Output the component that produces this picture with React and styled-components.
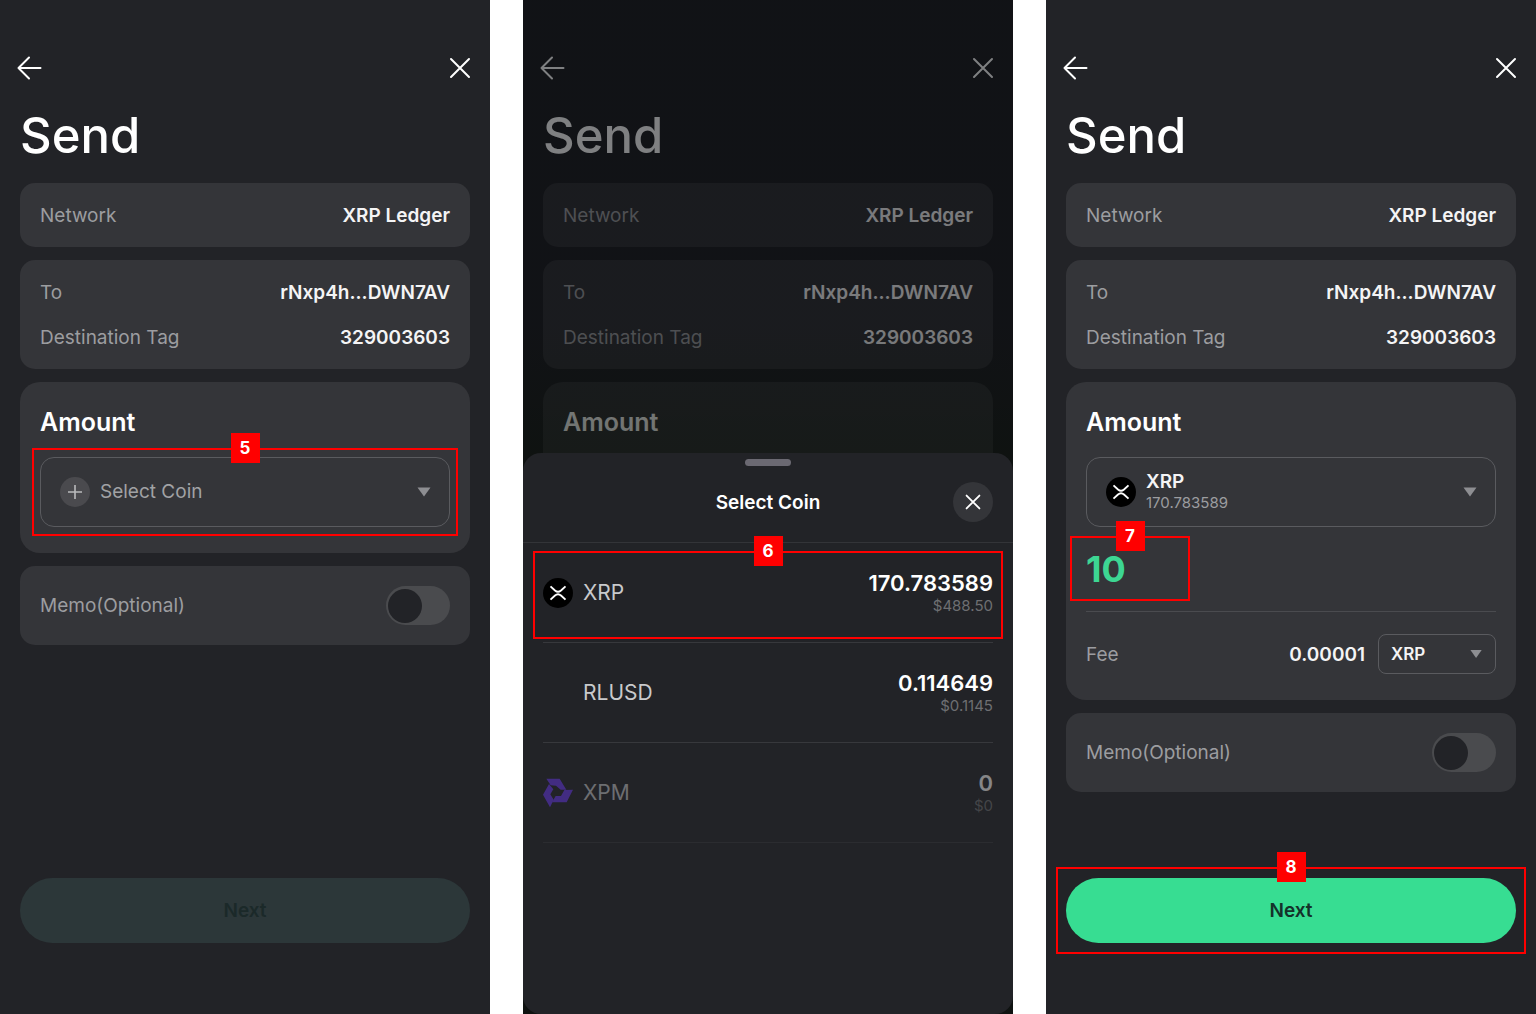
import React, { useId, useState } from "react"
import styled, { createGlobalStyle } from "styled-components"

const GlobalStyle = createGlobalStyle`
  * {
    box-sizing: border-box;
  }
  body {
    margin: 0;
    background: #ffffff;
    font-family: Inter, "Liberation Sans", sans-serif;
  }
  button, input, select {
    font-family: inherit;
  }
`

const Steps = styled.main`
  display: grid;
  grid-template-columns: repeat(3, minmax(0, 1fr));
  column-gap: 33px;
  min-height: 100vh;
`

const Screen = styled.section`
  position: relative;
  display: flex;
  flex-direction: column;
  padding: 48px 20px 71px;
  background: #222327;
  color: #ffffff;
`

const TopBar = styled.header`
  display: flex;
  justify-content: space-between;
  align-items: center;
  height: 40px;
  margin: 0 -4px;
`

const IconButton = styled.button`
  display: flex;
  align-items: center;
  justify-content: center;
  padding: 0;
  border: 0;
  background: none;
  color: inherit;
  cursor: pointer;
`

const Title = styled.h1`
  margin: 18px 0 17px;
  font-size: 49px;
  font-weight: 500;
  line-height: 60px;
`

const Cards = styled.div`
  display: flex;
  flex-direction: column;
  gap: 13px;
`

const Card = styled.div`
  display: flex;
  flex-direction: column;
  gap: 13px;
  padding: 16px 20px;
  border-radius: 15px;
  background: #343539;
`

const Row = styled.div`
  display: flex;
  justify-content: space-between;
  align-items: center;
  min-height: 32px;
`

const Label = styled.span`
  font-size: 19px;
  color: #9c9da0;
`

const Value = styled.span`
  font-size: 19px;
  font-weight: 600;
  color: #f4f4f5;
`

const AmountCard = styled.div`
  padding: 20px 20px 26px;
  border-radius: 20px;
  background: #343539;
`

const Heading = styled.h2`
  margin: 0 0 15px;
  font-size: 25px;
  font-weight: 600;
  line-height: 40px;
`

const CoinField = styled.div`
  position: relative;
  display: flex;
  align-items: center;
  gap: 10px;
  height: 70px;
  padding: 0 18px 0 19px;
  border: 1px solid #5a5b5f;
  border-radius: 14px;
`

const CoinText = styled.div`
  display: flex;
  flex: 1;
  flex-direction: column;
`

const Select = styled.select`
  width: 100%;
  padding: 0;
  border: 0;
  outline: 0;
  appearance: none;
  background: none;
  font-size: ${({ $size }) => $size || 19}px;
  font-weight: ${({ $strong }) => ($strong ? 600 : 400)};
  line-height: 22px;
  color: ${({ $strong }) => ($strong ? "#f4f4f5" : "#a1a2a5")};
`

const Balance = styled.span`
  font-size: 15px;
  line-height: 20px;
  color: #9c9da0;
`

const PlusCircle = styled.span`
  display: flex;
  align-items: center;
  justify-content: center;
  width: 30px;
  height: 30px;
  border-radius: 50%;
  background: #4a4a4e;
  color: #b9babc;
`

const AmountRow = styled.div`
  display: flex;
  align-items: center;
  height: 85px;
  border-bottom: 1px solid #4a4b4f;
`

const AmountBox = styled.div`
  position: relative;
  width: 88px;
  height: 48px;
`

const AmountInput = styled.input`
  width: 100%;
  height: 100%;
  padding: 0;
  border: 0;
  outline: 0;
  background: none;
  font-size: 36px;
  font-weight: 700;
  color: #3dd693;
`

const FeeRow = styled.div`
  display: flex;
  align-items: center;
  gap: 13px;
  margin-top: 22px;

  ${Label} {
    flex: 1;
  }
`

const FeeField = styled.div`
  display: flex;
  align-items: center;
  width: 118px;
  height: 40px;
  padding: 0 13px 0 12px;
  border: 1px solid #5a5b5f;
  border-radius: 8px;
`

const MemoRow = styled.label`
  display: flex;
  justify-content: space-between;
  align-items: center;
  padding: 20px;
  border-radius: 15px;
  background: #343539;
`

const Toggle = styled.input`
  display: flex;
  align-items: center;
  width: 64px;
  height: 39px;
  margin: 0;
  padding: 0 2px;
  border-radius: 20px;
  appearance: none;
  background: #4a4b4e;
  cursor: pointer;

  &::before {
    content: "";
    width: 34px;
    height: 34px;
    border-radius: 50%;
    background: #222327;
  }
  &:checked {
    justify-content: flex-end;
    background: #37dd92;
  }
`

const Footer = styled.footer`
  position: relative;
  margin-top: auto;
`

const NextButton = styled.button`
  display: block;
  width: 100%;
  height: 65px;
  border: 0;
  border-radius: 33px;
  background: #37dd92;
  font-size: 19px;
  font-weight: 600;
  color: #14322a;

  &:disabled {
    background: #2c3739;
    color: #1b2929;
  }
`

const Callout = styled.div`
  position: absolute;
  inset: ${({ $inset }) => $inset};
  display: flex;
  justify-content: center;
  border: 2px solid #ff0000;
  pointer-events: none;
`

const Badge = styled.span`
  width: 29px;
  height: 30px;
  margin-top: -17px;
  background: #ff0000;
  font-size: 17px;
  font-weight: 700;
  line-height: 30px;
  text-align: center;
  color: #ffffff;
`

const Backdrop = styled.div`
  position: absolute;
  inset: 0;
  background: linear-gradient(rgba(0, 2, 5, 0.5) 32%, rgba(0, 6, 0, 0.57) 45%);
`

const Sheet = styled.div`
  position: absolute;
  inset: 453px 0 0;
  display: flex;
  flex-direction: column;
  padding-top: 6px;
  border-radius: 18px;
  background: #222327;
`

const Handle = styled.span`
  align-self: center;
  width: 46px;
  height: 7px;
  border-radius: 4px;
  background: #6b6972;
`

const SheetHeader = styled.header`
  display: grid;
  grid-template-columns: 40px 1fr 40px;
  align-items: center;
  height: 77px;
  padding: 0 20px 4px;
  border-bottom: 1px solid #333438;
`

const SheetTitle = styled.h2`
  grid-column: 2;
  margin: 0;
  font-size: 19px;
  font-weight: 600;
  text-align: center;
`

const CloseButton = styled(IconButton)`
  width: 40px;
  height: 40px;
  border-radius: 50%;
  background: #343539;
`

const CoinList = styled.ul`
  margin: 0;
  padding: 0 20px;
  list-style: none;
`

const CoinItem = styled.li`
  position: relative;
  border-bottom: 1px solid #37383c;
  opacity: ${({ $dim }) => ($dim ? 0.45 : 1)};
`

const CoinButton = styled.button`
  display: grid;
  grid-template-columns: 30px 1fr auto;
  column-gap: 10px;
  align-items: center;
  width: 100%;
  height: 99px;
  padding: 0;
  border: 0;
  background: none;
  text-align: left;
  color: #ffffff;
`

const CoinName = styled.span`
  grid-column: 2;
  font-size: 21px;
  color: #c9cacc;
`

const CoinAmount = styled.span`
  display: flex;
  flex-direction: column;
  text-align: right;
  font-size: 22px;
  font-weight: 600;
  line-height: 26px;
`

const CoinPrice = styled.span`
  font-size: 15px;
  font-weight: 400;
  line-height: 20px;
  color: #6e6f72;
`

const BackIcon = () => (
  <svg width="28" height="28" viewBox="0 0 28 28" fill="none" stroke="currentColor" strokeWidth="2" strokeLinecap="round" strokeLinejoin="round" aria-hidden="true">
    <path d="M24.500 14H2.500M13 3.500L2.500 14L13 24.500" />
  </svg>
)

const CloseIcon = ({ size }) => (
  <svg width={size} height={size} viewBox="0 0 28 28" fill="none" stroke="currentColor" strokeWidth={size > 20 ? 2 : 2.6} strokeLinecap="round" aria-hidden="true">
    <path d="M5 5L23 23M23 5L5 23" />
  </svg>
)

const PlusIcon = () => (
  <svg width="16" height="16" viewBox="0 0 16 16" stroke="currentColor" strokeWidth="1.600" aria-hidden="true">
    <path d="M8 1V15M1 8H15" />
  </svg>
)

const Caret = () => (
  <svg width="14" height="10" viewBox="0 0 14 10" fill="#8d8e92" aria-hidden="true">
    <path d="M0.500 0.500H13.500L7 9.500Z" />
  </svg>
)

const XrpLogo = () => (
  <svg width="30" height="30" viewBox="0 0 30 30" aria-hidden="true">
    <circle cx="15" cy="15" r="15" fill="#000" />
    <g fill="none" stroke="#fff" strokeWidth="1.900">
      <path d="M7.500 8.400L12 12.500Q15 15 18 12.500L22.500 8.400" />
      <path d="M7.500 21.600L12 17.500Q15 15 18 17.500L22.500 21.600" />
    </g>
  </svg>
)

const XpmLogo = () => (
  <svg width="30" height="30" viewBox="0 0 90 90" fill="#6a38f0" aria-hidden="true">
    <path d="M10 2H50L70 35H53L39 23L23 22Z" />
    <path d="M90 35L71 73H27L38 54H54L64 36Z" />
    <path d="M18 18L31 34L22 49L32 65L21 88L0 50Z" />
  </svg>
)

const Mark = ({ number, inset }) => (
  <Callout $inset={inset}>
    <Badge>{number}</Badge>
  </Callout>
)

const SendHeader = () => (
  <>
    <TopBar>
      <IconButton aria-label="Back"><BackIcon /></IconButton>
      <IconButton aria-label="Close"><CloseIcon size={28} /></IconButton>
    </TopBar>
    <Title>Send</Title>
  </>
)

const Details = () => (
  <>
    <Card>
      <Row>
        <Label>Network</Label>
        <Value>XRP Ledger</Value>
      </Row>
    </Card>
    <Card>
      <Row>
        <Label>To</Label>
        <Value>rNxp4h...DWN7AV</Value>
      </Row>
      <Row>
        <Label>Destination Tag</Label>
        <Value>329003603</Value>
      </Row>
    </Card>
  </>
)

const Memo = () => {
  const id = useId()

  return (
    <MemoRow htmlFor={id}>
      <Label>Memo(Optional)</Label>
      <Toggle id={id} type="checkbox" />
    </MemoRow>
  )
}

const EmptyStep = () => (
  <Screen>
    <SendHeader />
    <Cards>
      <Details />
      <AmountCard>
        <Heading>Amount</Heading>
        <CoinField>
          <PlusCircle><PlusIcon /></PlusCircle>
          <CoinText>
            <Select aria-label="Coin">
              <option>Select Coin</option>
            </Select>
          </CoinText>
          <Caret />
          <Mark number={5} inset="-10px -9px" />
        </CoinField>
      </AmountCard>
      <Memo />
    </Cards>
    <Footer>
      <NextButton disabled>Next</NextButton>
    </Footer>
  </Screen>
)

const coins = [
  { name: "XRP", amount: "170.783589", price: "$488.50", logo: <XrpLogo />, mark: 6 },
  { name: "RLUSD", amount: "0.114649", price: "$0.1145" },
  { name: "XPM", amount: "0", price: "$0", logo: <XpmLogo />, dim: true },
]

const PickStep = () => (
  <Screen>
    <SendHeader />
    <Cards>
      <Details />
      <AmountCard>
        <Heading>Amount</Heading>
      </AmountCard>
    </Cards>
    <Backdrop />
    <Sheet role="dialog" aria-label="Select Coin">
      <Handle />
      <SheetHeader>
        <SheetTitle>Select Coin</SheetTitle>
        <CloseButton aria-label="Close list"><CloseIcon size={20} /></CloseButton>
      </SheetHeader>
      <CoinList>
        {coins.map(coin => (
          <CoinItem key={coin.name} $dim={coin.dim}>
            <CoinButton>
              {coin.logo}
              <CoinName>{coin.name}</CoinName>
              <CoinAmount>
                {coin.amount}
                <CoinPrice>{coin.price}</CoinPrice>
              </CoinAmount>
            </CoinButton>
            {coin.mark && <Mark number={coin.mark} inset="8px -10px 3px" />}
          </CoinItem>
        ))}
      </CoinList>
    </Sheet>
  </Screen>
)

const FilledStep = () => {
  const [amount, setAmount] = useState("10")

  return (
    <Screen>
      <SendHeader />
      <Cards>
        <Details />
        <AmountCard>
          <Heading>Amount</Heading>
          <CoinField>
            <XrpLogo />
            <CoinText>
              <Select $strong aria-label="Coin">
                <option>XRP</option>
              </Select>
              <Balance>170.783589</Balance>
            </CoinText>
            <Caret />
          </CoinField>
          <AmountRow>
            <AmountBox>
              <AmountInput
                aria-label="Amount"
                value={amount}
                onChange={e => setAmount(e.target.value)}
              />
              <Mark number={7} inset="-9px -16px -8px" />
            </AmountBox>
          </AmountRow>
          <FeeRow>
            <Label>Fee</Label>
            <Value>0.00001</Value>
            <FeeField>
              <Select $strong $size={17} aria-label="Fee currency">
                <option>XRP</option>
              </Select>
              <Caret />
            </FeeField>
          </FeeRow>
        </AmountCard>
        <Memo />
      </Cards>
      <Footer>
        <NextButton>Next</NextButton>
        <Mark number={8} inset="-11px -10px" />
      </Footer>
    </Screen>
  )
}

const App = () => (
  <>
    <GlobalStyle />
    <Steps>
      <EmptyStep />
      <PickStep />
      <FilledStep />
    </Steps>
  </>
)

export default App
